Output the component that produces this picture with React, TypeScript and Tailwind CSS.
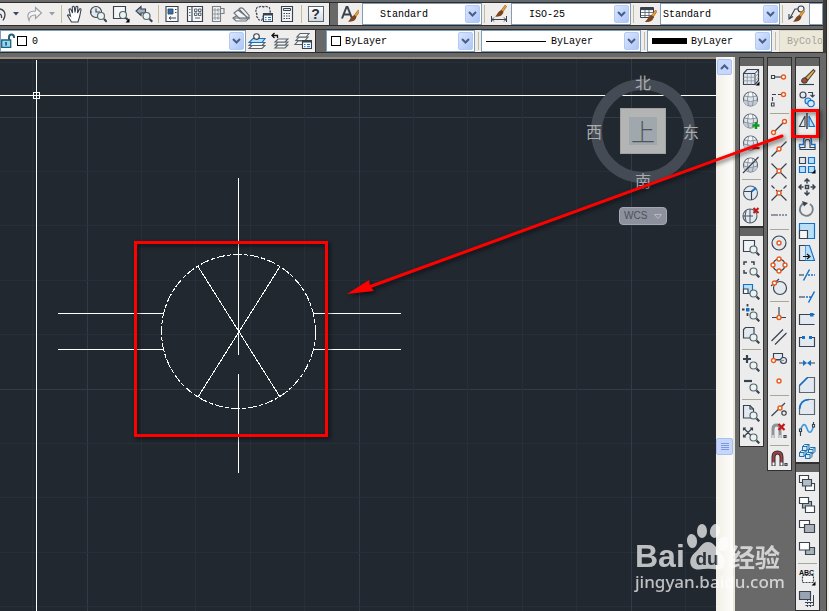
import type { ReactNode } from "react";

const K = "#39434f";
const B = "#1471c9";
const O = "#ea5a1c";
const F = "#e3e9f0";
const L = "#b9dff7";

function Icon({ children, w = 18 }: { children: ReactNode; w?: number }) {
  return (
    <svg width={w} height="18" viewBox={`0 0 ${w} 18`} fill="none" stroke={K} strokeWidth="1.15" className="shrink-0">
      {children}
    </svg>
  );
}

const Dot = ({ x, y, r = 2 }: { x: number; y: number; r?: number }) => (
  <circle cx={x} cy={y} r={r} fill="#fff" stroke={O} strokeWidth="1.4" />
);

const Mag = ({ x = 11, y = 11 }: { x?: number; y?: number }) => (
  <g>
    <path d={`M${x + 3} ${y + 3}l2.800 2.800`} strokeWidth="2.2" />
    <circle cx={x} cy={y} r="3.500" fill="#e9f5f1" stroke="#5a646f" strokeWidth="1.200" />
  </g>
);

const Globe = () => (
  <g>
    <circle cx="8.500" cy="9" r="7" fill="#dfe5ec" stroke="#58626d" strokeWidth="1.200" />
    <path d="M3 5.500Q5 2.500 8.500 2.500T14 5.500q-5.500 2-11 0z" fill="#f7f9fb" stroke="none" />
    <path d="M2 10.500q6.500 2.500 13 0v2l-3 3H5l-3-3z" fill="#c3ccd6" stroke="none" />
    <path d="M1.500 10q7 3 14 0M2.500 6q6 2 12 0M6.500 2.500q-2 6.500 0 13M10.500 2.500q2 6.500 0 13" stroke="#7b8590" strokeWidth=".8" />
  </g>
);

const Brush = ({ transform }: { transform?: string }) => (
  <g stroke="none" transform={transform}>
    <path d="M16 0l2 2-5.500 8-2.500-2z" fill="#eda13a" stroke="#8b5a1c" strokeWidth=".9" />
    <path d="M10.500 7l3 2.800c-1 6-6 7.500-12.500 6.700 4-2 4-7.500 9.500-9.500z" fill="#7d4420" />
  </g>
);

const Flyout = () => <path d="M17.500 13.500v4h-4z" fill="#000" stroke="none" />;

const Cube = ({ x, y }: { x: number; y: number }) => (
  <g transform={`translate(${x} ${y})`} stroke="#1d6fae" strokeWidth="1">
    <path d="M.5 2.500l2-2h4.500v4l-2 2H.5z" fill="#d7ecf9" />
    <path d="M.5 2.500H5v4M5 2.500l2-2" />
  </g>
);

type Tool = [string, ReactNode] | null;

const views: Tool[] = [
  ["Named views", <><path d="M1.500 5.500L5 1.500h11.500v11L13 16.500H1.500z" fill={F} /><path d="M1.500 5.500H13v11M13 5.500l3.500-4" strokeWidth="1" /><path d="M5.300 5.500v11M9.200 5.500v11M1.500 9.200H13M1.500 12.800H13M13 9l3.500-3.500M13 13l3.500-4" stroke="#8b949e" strokeWidth=".8" /><Flyout /></>],
  ["Globe", <Globe />],
  ["Add globe", <><Globe /><path d="M14 10v7M10.500 13.500h7" stroke="#0c9a1e" strokeWidth="2.400" /></>],
  ["Remove globe", <><Globe /><path d="M10.500 14h7" stroke="#c41414" strokeWidth="2.400" /></>],
  ["Hide globe", <><Globe /><path d="M1 17L16.500 1" /></>],
  null,
  ["Globe corner", <><circle cx="8.500" cy="9" r="7" fill={F} stroke="#58626d" /><path d="M2 7.500h7.500V16M9.500 7.500L14 4" /><path d="M9.500 7.500L14 4" stroke={B} strokeWidth="1.800" /></>],
  ["Delete globe", <><circle cx="8" cy="10" r="7" fill={F} stroke="#58626d" /><path d="M1 10h10M8 3v14M4 5q-2 5 0 10" strokeWidth=".9" /><path d="M11.500 2l5 5M16.500 2l-5 5" stroke="#c41414" strokeWidth="2" /></>],
];

const zooms: Tool[] = [
  ["Zoom window", <><path d="M1.500 2.500h11v11h-11z" fill="#f1f4f7" /><Mag x={11.5} y={11.5} /></>],
  ["Zoom dynamic", <><path d="M2 5V2h3M9 2h3v3M2 10v3h3" strokeWidth="1.500" /><Mag x={11.5} y={11.5} /></>],
  ["Zoom scale", <><path d="M1.500 2.500h9v9h-9z" fill={L} stroke={B} /><path d="M1.500 7h4.500v4.500H1.500z" fill="#fff" /><Mag x={11.5} y={11.5} /></>],
  ["Zoom center", <><path d="M4 4h3.500v3.500H4z" fill={B} stroke="none" /><path d="M5.500 0v2.500M5.500 9v3M0 5.500h2.500M9 5.500h3" strokeWidth="1.800" /><Mag x={11.5} y={11.5} /></>],
  ["Zoom object", <><path d="M1.500 3.500l2-2H12v8l-2 2.500H1.500z" fill={F} /><Mag x={11.5} y={11.5} /></>],
  null,
  ["Zoom in", <><path d="M5 1v8M1 5h8" strokeWidth="2.200" /><Mag x={11.5} y={11.5} /></>],
  ["Zoom out", <><path d="M2 5h8" strokeWidth="2.200" /><Mag x={11.5} y={11.5} /></>],
  null,
  ["Zoom all", <><path d="M1.500 1.500H8l3.500 3.500v9h-10z" fill={F} /><path d="M8 1.500V5h3.500" /><Mag x={11.5} y={11.5} /></>],
  ["Zoom extents", <><path d="M1.500 2l9 9M10.500 2l-9 9M1.500 4.500V2H4M8 2h2.500v2.500M1.500 8.500V11H4" /><Mag x={11.5} y={11.5} /></>],
];

const snaps: Tool[] = [
  ["Temporary track point", <><path d="M4 9h8" /><path d="M1.500 7.500h3v3h-3z" fill="#fff" /><Dot x={13.5} y={9} /></>],
  ["Snap from", <><path d="M12 4.500H2.500v8" strokeDasharray="4 2" /><path d="M1.500 13h2.500v3H1.500z" fill="#fff" /><Dot x={13.5} y={4.5} /></>],
  null,
  ["Endpoint", <><path d="M4 14L14 4" /><Dot x={3.5} y={14.5} /><Dot x={14.5} y={3.5} /></>],
  ["Midpoint", <><path d="M1.500 16.500l15-15" /><Dot x={9} y={9} /></>],
  ["Intersection", <><path d="M1.500 1.500l15 15M16.500 1.500l-15 15" /><Dot x={9} y={9} /></>],
  ["Apparent intersection", <><path d="M1.500 1.500l3 3M6 6l10.500 10.500M16.500 1.500l-3 3M12 6L1.500 16.500" /><Dot x={9} y={9} /></>],
  ["Extension", <path d="M1 9h7M9 9h2M12 9h2M15 9h2" />],
  null,
  ["Center", <><circle cx="9" cy="9" r="7" fill={F} /><Dot x={9} y={9} /></>],
  ["Quadrant", <><circle cx="9" cy="9" r="6" fill={F} /><Dot x={9} y={3} /><Dot x={9} y={15} /><Dot x={3} y={9} /><Dot x={15} y={9} /></>],
  ["Tangent", <><circle cx="10" cy="10" r="6.500" fill={F} /><path d="M1 8l8-7" /><Dot x={4.5} y={5} /></>],
  null,
  ["Perpendicular", <><path d="M9 1v10M2 11.500h14" /><Dot x={9} y={11.5} /></>],
  ["Parallel", <path d="M1.500 13L13 1.500M5 16.500L16.500 5" />],
  ["Insert", <><path d="M3.500 3.500h9v6h-9z" fill={F} /><circle cx="13.500" cy="10.500" r="3" fill={F} /><path d="M4 10.500h10" stroke="#8b949e" /><Dot x={3.5} y={10.5} /></>],
  ["Node", <Dot x={9} y={9} />],
  null,
  ["Nearest", <><path d="M1.500 16L15 3" /><circle cx="14" cy="13" r="2.200" /><Dot x={10} y={8} /></>],
  ["No snap", <><path d="M3 16V7q0-4 3.500-4T10 7v9" stroke="#8d949c" strokeWidth="3" /><path d="M3 13v3M10 13v3" stroke="#dfe2e5" strokeWidth="1.500" /><path d="M8.500 2l6 6M14.500 2l-6 6" stroke="#c41414" strokeWidth="2.200" /><path d="M14 13.500h2v2h-2z" /></>],
  null,
  ["Snap settings", <><path d="M3.500 16V7q0-4.500 4-4.500t4 4.500v9" stroke="#30333a" strokeWidth="4" /><path d="M3.500 13V7q0-4.500 4-4.500t4 4.500v6" stroke="#a5413e" strokeWidth="2" /><path d="M3.500 12.500v3M11.500 12.500v3" stroke="#fff" strokeWidth="2" /><path d="M15 13.500h2v2h-2z" /></>],
];

const modify: Tool[] = [
  ["Erase", <><path d="M7 10l8.500-8.500 1.500 1.500L10 12z" fill="#e5b565" stroke="#5a4a30" /><path d="M4 11.500q2-2.500 4-1l1.500 2q-1 3-4 2.500-2.500-1-1.500-3.500z" fill="#b54a22" /><path d="M1 16.500h15" /></>],
  ["Copy", <><circle cx="5" cy="5" r="3" fill={F} /><path d="M10 2.500h4.500V7M12.500 5l2 2 2-2" /><circle cx="10" cy="11" r="3" fill={L} stroke={B} /><circle cx="13" cy="13.500" r="3.200" fill="#d7ebfa" stroke={B} /></>],
  ["Mirror", <><path d="M7 4v10.500H1.500z" fill={F} /><path d="M11 4v10.500h5.500z" fill={L} stroke={B} /><path d="M9 1v16" stroke="#111" /></>],
  ["Offset", <><path d="M1.500 13.500v-3h4V7q0-4.500 4-4.500t4 4.500v3.500h3.500v3" stroke={B} strokeWidth="1.400" /><path d="M2 15.500h15v-2h-5V8q0-2.500-2.500-2.500T7 8v5.500H2z" fill={F} /></>],
  ["Array", <><path d="M1.500 1.500h6v6h-6z" fill={F} /><path d="M10.500 1.500h6v6h-6zM1.500 10.500h6v6h-6zM10.500 10.500h6v6h-6z" fill={L} stroke={B} /><Flyout /></>],
  ["Move", <path d="M9 1v4.500M9 12.500V17M1 9h4.500M12.500 9H17M6.500 3.500L9 1l2.500 2.500M6.500 14.500L9 17l2.500-2.500M3.500 6.500L1 9l2.500 2.500M14.500 6.500L17 9l-2.500 2.500M7.500 7.500h3v3h-3z" strokeWidth="1.500" />],
  ["Rotate", <><path d="M7 3A6.500 6.500 0 1 0 12 4" stroke="#77808a" strokeWidth="1.800" /><path d="M4 1l6 2-4 3.500z" fill={K} stroke="none" /></>],
  ["Scale", <><path d="M1.500 1.500h15v15h-15z" fill={L} stroke={B} /><path d="M1.500 8.500h8v8h-8z" fill="#f4f6f8" /></>],
  ["Stretch", <><path d="M7 1.500h4.500l5 15H7z" fill={L} stroke={B} /><path d="M7 1.500H1.500v15H7" fill={F} /><path d="M5 12.500h6M9 10l3 2.500L9 15" stroke="#111" /></>],
  ["Trim", <><path d="M1 9h5" /><path d="M10 9h2M13 9h2M16 9h1M5.500 14.500L11.500 3.500" stroke={B} strokeWidth="1.500" /></>],
  ["Extend", <><path d="M1 9h6" /><path d="M8 9h2M11 9h2M10.500 14.500L16.500 3.500" stroke={B} strokeWidth="1.500" /></>],
  ["Break at point", <><path d="M16.500 4.500h-15v10h15" fill={F} /><path d="M12 3h3.500v3.500H12z" fill={B} stroke="none" /></>],
  ["Break", <><path d="M4.500 5.500h-3v9h15v-9h-3" fill={F} /><path d="M4 4h3v3H4zM11 4h3v3h-3z" fill={B} stroke="none" /></>],
  ["Join", <><path d="M1 9h5M12 9h5" /><path d="M5 6l4 3-4 3zM13 6L9 9l4 3z" fill={B} stroke="none" /></>],
  ["Chamfer", <><path d="M1.500 9.500l8-8h7v15h-15z" fill={F} stroke="#5b6672" /><path d="M1.500 9.500l8-8" stroke={B} strokeWidth="1.600" /></>],
  ["Fillet", <><path d="M1.500 12Q2 2 11 1.500h5.500v15h-15z" fill={F} stroke="#5b6672" /><path d="M1.500 11Q2 2 11 1.500" stroke={B} strokeWidth="1.600" /></>],
  ["Blend curves", <><path d="M2.500 11v5M15.500 2v3" /><path d="M2.500 10Q6 0 9 8.500t6.500-2" stroke="#3a9be6" strokeWidth="1.600" /><path d="M1.500 9h2v2.500h-2zM14.500 4.500h2V7h-2z" fill="#fff" /></>],
  ["Explode", <><Cube x={4} y={2} /><Cube x={10} y={5} /><Cube x={1} y={8} /><Cube x={7} y={10} /></>],
];

const order: Tool[] = [
  ["Bring to front", <><path d="M1.500 1.500h9v7h-9zM7.500 9.500h9v7h-9z" fill="#fff" /><path d="M4.500 5.500h9v6.500h-9z" fill="#b3bdc8" /></>],
  ["Send to back", <><path d="M4.500 5.500h9v6.500h-9z" fill="#9fb3b5" /><path d="M1.500 1.500h9v6h-9zM7.500 10h9v6.500h-9z" fill="#fff" /></>],
  ["Bring above objects", <><path d="M1.500 2.500h10v7h-10z" fill="#fff" /><path d="M6.500 6.500h10v8h-10z" fill="#adb0b8" /></>],
  ["Send under objects", <><path d="M7.500 7.500h9v7h-9z" fill="#a6b2b5" /><path d="M1.500 2.500h10v7.500h-10z" fill="#fff" /></>],
  null,
  ["Bring text to front", <><path d="M4.500 7.500H15.500v7h-11z" fill="#f6f6f6" strokeDasharray="2 1" /><path d="M0 1h16v6H0z" fill="#ececec" stroke="none" /><text x="1" y="7" fontSize="7" fontWeight="700" fontFamily="Liberation Sans, sans-serif" fill="#111" stroke="none">ABC</text><Flyout /></>],
  ["Send hatch to back", <><path d="M7.500 15.500h8v-9M7 12.500h8.500M9.500 9v8M12.500 9v8M15.500 5v12" strokeDasharray="2 1" strokeWidth="1" /><path d="M1.500 1.500h11v8h-11z" fill="#98a4b3" /></>],
];

const nav: Tool[] = [
  ["Pan", <><path d="M5.500 17L1.500 10.500q.5-1.500 3 .5L3 4.500q1-1.500 2 0L6.500 8 6.300 2q1.200-1.500 2 0L9 7.500l1-5.800q1.300-1 1.800.3L11.500 8l2-4q1.500-.8 1.500.8L13.500 12 12 17z" fill="#fff" strokeWidth="1.100" /></>],
  ["Zoom realtime", <><circle cx="7" cy="7" r="5.500" fill={F} /><path d="M7 3.500V7h4M2 7h1" /><Mag x={12} y={11} /></>],
  ["Zoom window", <><path d="M1.500 1.500h12v12h-12z" fill="#f5f5f5" /><Mag x={11} y={10} /><Flyout /></>],
  ["Zoom previous", <><path d="M6 1.500v2.500h4.500v4H6v2.500L1 6z" fill="#a3b1c4" /><Mag x={11.5} y={11} /></>],
];

const panels: Tool[] = [
  ["Properties", <><path d="M3 1.500h12v15H3z" fill="#f8f9fb" /><path d="M5 4h5v5H5z" fill="#2d6fb0" strokeWidth=".8" /><path d="M12 4.500h1.500M12 7.500h1.500M6 13h7M8 11.500L6 13l2 1.500" strokeWidth="1" /></>],
  ["DesignCenter", <><path d="M1.500 1.500h15v15h-15zM6 1.500v15" fill="#f8f9fb" /><path d="M8.500 4h2.500v2.500H8.500zM12.500 4H15v2.500h-2.500zM8.500 8H11v2.500H8.500zM12.500 8H15v2.500h-2.500zM9 13h5M3 4.500h1.500M3 7.500h1.500M3 10.500h1.500" strokeWidth=".8" /></>],
  ["Tool palettes", <><path d="M3.500 1.500h8v15h-8zM11.500 3.500H15v5h-3.500z" fill="#f0f0f0" stroke="#78818a" /><path d="M5 4h2v2H5zM8.500 4h1.500v2H8.500zM5 8h2v2H5zM8.500 8h1.500v2H8.500zM5 12h2v2H5zM8.500 12h1.500v2H8.500z" stroke="#78818a" strokeWidth=".7" /></>],
  ["Sheet set", <><path d="M1 13l5-3h8l3 3-3 3H4z" fill="#f4f4f4" stroke="#6b747e" /><path d="M2 8l4-3 9 7-1 2H8zM7 4q2-2 4-.5l6 7v3l-2-1z" fill="#f4f4f4" stroke="#6b747e" /><path d="M1 13h13l3 0" stroke="#6b747e" /></>],
  ["Markup set", <><path d="M1.500 4q0-2.500 3-2 2-1.500 4 0 2-1.500 4 0 3 0 2 3 1.500 2 0 3.500H9L7 15q-4 1-3.500-2-3-1-1.500-4-2-2-.5-5z" fill="#eee" strokeDasharray="2.500 1" /><path d="M8.500 8.500h9v8h-9z" fill="#fff" /><path d="M8.500 9.500h9" strokeWidth="2" /><path d="M10 12.500h1.500M13 12.500h3M10 14.700h1.500M13 14.700h3" stroke={B} strokeWidth="1" /></>],
  ["Calculator", <><path d="M3.500 1.500h11v15h-11z" fill="#f4f6f8" /><path d="M5.500 3.500h7v2h-7z" fill={F} strokeWidth="1" /><path d="M5.500 8.500h7M5.500 11h7M5.500 13.500h7" strokeDasharray="1.500 1" strokeWidth="1.200" /></>],
];

const layers: Tool[] = [
  ["Make current", <><path d="M4 13.500h13l-3 3H1z" fill="#f6f6f6" stroke="#5a646f" /><path d="M4 10.500h13l-3 3H1z" fill="#f6f6f6" stroke="#5a646f" /><path d="M5 6.500h12l-3 4H1z" fill={L} stroke={B} /><circle cx="8.500" cy="4.500" r="2.800" fill="#f6f6f6" /></>],
  ["Layer previous", <><path d="M7 13h10l-3 3H4z" fill="#f6f6f6" stroke="#5a646f" /><path d="M7 10h10l-3 3H4z" fill="#f6f6f6" stroke="#5a646f" /><path d="M7 7h10l-3 3H4z" fill="#f6f6f6" stroke="#5a646f" /><path d="M1 3.500h5.500V6M3.500 1L1 3.500 3.500 6" stroke="#111" strokeWidth="1.300" /></>],
  ["Layer states", <><path d="M4 9h9l-3 3.500H1z" fill="#f6f6f6" stroke="#5a646f" /><path d="M5 5h9l-3 3.500H2z" fill="#f6f6f6" stroke="#5a646f" /><path d="M6 1.500h9L12 5H3z" fill="#f6f6f6" stroke="#5a646f" /><path d="M8.500 8.500h9v8h-9z" fill="#fff" /><path d="M8.500 9.500h9" strokeWidth="2" /><path d="M10 12.500h1.500M13 12.500h3M10 14.700h1.500M13 14.700h3" stroke={B} strokeWidth="1" /></>],
];

function Palette({ tools, label }: { tools: Tool[]; label: string }) {
  return (
    <section aria-label={label} className="flex w-[25px] flex-col border border-[#303030] bg-[#ececec]">
      <div className="h-2 bg-[#636363]" />
      {tools.map((t, i) =>
        t ? (
          <button key={i} aria-label={t[0]} className="flex h-[22px] w-full items-center pl-0.5">
            <Icon>{t[1]}</Icon>
          </button>
        ) : (
          <div key={i} className="flex h-1.5 items-center px-0.5">
            <div className="h-px w-full bg-[#a9a695]" />
          </div>
        ),
      )}
    </section>
  );
}

function ToolRow({ tools }: { tools: Tool[] }) {
  return (
    <>
      {tools.map((t, i) => t && (
        <button key={i} aria-label={t[0]} className="flex h-full w-[23px] shrink-0 items-center pl-0.5">
          <Icon>{t[1]}</Icon>
        </button>
      ))}
    </>
  );
}

function Sep({ wide = false }: { wide?: boolean }) {
  return (
    <div className={`flex h-full shrink-0 items-center justify-center bg-[#efeeec] ${wide ? "w-1.5" : "w-[5px]"}`}>
      <div className="h-[18px] w-px bg-[#c3bb9c]" />
    </div>
  );
}

function Combo({ value, label, className, mark, chevron = true }: { value: string; label: string; className: string; mark?: ReactNode; chevron?: boolean }) {
  return (
    <div className={`grid h-full grid-cols-1 grid-rows-1 overflow-hidden border border-[#7d9db8] bg-white font-['Liberation_Mono',monospace] text-[10px] text-black ${chevron ? "shrink-0" : "min-w-0 flex-1"}`}>
      <select aria-label={label} className={`col-start-1 row-start-1 h-full appearance-none bg-transparent outline-none ${className}`}>
        <option>{value}</option>
      </select>
      <span className="pointer-events-none col-start-1 row-start-1 flex items-center self-center justify-self-start">{mark}</span>
      {chevron && (
        <span className="pointer-events-none col-start-1 row-start-1 mr-px flex h-[18px] w-[15px] items-center justify-center self-center justify-self-end rounded-xs border border-[#b5c9f5] bg-linear-to-br from-[#dbe6ff] to-[#aec6f6]">
          <svg width="9" height="6" viewBox="0 0 9 6" fill="none" stroke="#465f88" strokeWidth="2"><path d="M1 1l3.500 3.500L8 1" /></svg>
        </span>
      )}
    </div>
  );
}

const Down = ({ color }: { color: string }) => (
  <svg width="6" height="4" viewBox="0 0 6 4"><path d="M0 0h6L3 3.500z" fill={color} /></svg>
);

function StyleButton({ label, children }: { label: string; children: ReactNode }) {
  return (
    <button aria-label={label} className="flex h-full w-6 shrink-0 items-center justify-center">
      <Icon>{children}</Icon>
    </button>
  );
}

function StandardBar() {
  return (
    <div className="flex h-6 w-full overflow-hidden border-y border-[#2c2c2c]">
      <div className="flex shrink-0 items-center border-r border-[#2c2c2c] bg-[#efeeec] pr-0.5">
        <button aria-label="Undo" className="w-2">
          <svg width="8" height="18" viewBox="0 0 8 18" fill="none" stroke={K} strokeWidth="1.300"><path d="M0 4q5 1 5 6 0 2-2 5.500M0 9q2 1 1.500 4" /></svg>
        </button>
        <button aria-label="Undo list" className="flex w-[15px] justify-center"><Down color="#3c4766" /></button>
        <button aria-label="Redo" className="flex w-[21px] justify-center">
          <Icon><path d="M10.500 2.500l6 5.500-6 5.500V10Q5 9.500 4 15.500 0 6 10.500 6z" fill="#f4f4f4" stroke="#9b9fa4" /></Icon>
        </button>
        <button aria-label="Redo list" className="flex w-[15px] justify-center"><Down color="#9b9fa4" /></button>
        <Sep />
        <ToolRow tools={nav} />
        <Sep />
        <ToolRow tools={panels} />
        <Sep />
        <button aria-label="Help" className="flex w-[23px] justify-center">
          <span className="flex size-4 items-center justify-center border border-[#59636e] bg-linear-to-b from-white to-[#d5dae0] font-['Liberation_Sans',sans-serif] text-sm leading-none font-bold text-[#2b333d]">?</span>
        </button>
      </div>
      <div className="w-2 shrink-0 bg-[#696969]" />
      <div className="flex min-w-0 flex-1 items-center bg-[#efeeec]">
        <StyleButton label="Text style">
          <path d="M1 13.500L5.500 2h1L11 13.500M3 9.500h6" strokeWidth="2" /><Brush transform="translate(6 5) scale(.7)" />
        </StyleButton>
        <Combo label="Text style name" value="Standard" className="w-[118px] pl-[17px]" />
        <Sep />
        <StyleButton label="Dimension style"><Brush transform="translate(4 0) scale(.7)" /><path d="M1.500 11v6M16.500 11v6M2 14.500h14M4 12.500l-2 2 2 2M14 12.500l2 2-2 2" strokeWidth="1" /></StyleButton>
        <Combo label="Dimension style name" value="ISO-25" className="w-[118px] pl-[17px]" />
        <Sep />
        <StyleButton label="Table style"><path d="M1.500 2.500h13v10h-13z" fill="#fff" strokeWidth="1" /><path d="M1.500 4h13" strokeWidth="2.200" /><path d="M6 4v8M10 4v8M2 7.500h12M2 10.500h12" strokeWidth=".7" /><Brush transform="translate(5 5) scale(.72)" /></StyleButton>
        <Combo label="Table style name" value="Standard" className="w-[118px] pl-0.5" />
        <Sep />
        <StyleButton label="Multileader style"><circle cx="13" cy="4" r="3" fill="#f5f5f5" /><path d="M10 4H7L2 13M1 9v5l4-2.500" /><Brush transform="translate(4 5) scale(.7)" /></StyleButton>
        <Combo label="Multileader style name" value="" className="w-full" chevron={false} />
      </div>
    </div>
  );
}

const Swatch = () => <span className="block size-[10px] border border-black bg-white" />;

function LayerBar() {
  return (
    <div className="flex h-6 w-full overflow-hidden border-y border-[#2c2c2c]">
      <div className="flex shrink-0 border-r border-[#2c2c2c] bg-[#efeeec]">
        <Combo
          label="Layer"
          value="0"
          className="w-[244px] pl-[31px]"
          mark={
            <span className="flex items-center gap-0.5">
              <svg width="14" height="16" viewBox="0 0 14 16" fill="none" stroke="#27607d" strokeWidth="1.300"><path d="M8 7V4q0-2.500 2.500-2.500T13 4v1" stroke="#27607d" strokeWidth="2" /><path d="M.7 7h9v7.300h-9z" fill="#8fdaf0" /><path d="M5 9v3.500" strokeWidth="1.800" /></svg>
              <Swatch />
            </span>
          }
        />
        <ToolRow tools={layers} />
      </div>
      <div className="w-2.5 shrink-0 bg-[#696969]" />
      <div className="flex min-w-0 flex-1 bg-[#efeeec]">
        <Combo label="Color" value="ByLayer" className="w-[147px] pl-[18px]" mark={<span className="pl-1"><Swatch /></span>} />
        <Sep wide />
        <Combo label="Linetype" value="ByLayer" className="w-[158px] pl-[69px]" mark={<span className="pl-1"><span className="block h-px w-[60px] bg-black" /></span>} />
        <Sep wide />
        <Combo label="Lineweight" value="ByLayer" className="w-[123px] pl-[43px]" mark={<span className="pl-1"><span className="block h-1.5 w-[35px] bg-black" /></span>} />
        <Sep wide />
        <button disabled className="ml-px min-w-0 flex-1 overflow-hidden border border-[#d6d2c2] bg-[#ebe8da] pl-[7px] text-left font-['Liberation_Mono',monospace] text-[10px] text-[#a5a293]">ByColor</button>
      </div>
    </div>
  );
}

const gridSteps = Array.from({ length: 40 }, (_, i) => i - 1);

function Drawing() {
  return (
    <svg className="absolute inset-0 size-full" shapeRendering="crispEdges" fill="none" aria-hidden="true">
      <g transform="translate(0 -59)">
        {gridSteps.map((n) => {
          const x = Math.floor(87 + n * 54.4) + 0.5;
          const y = Math.floor(117 + n * 54.4) + 0.5;
          return (
            <g key={n} stroke={n % 5 === 0 ? "#333b48" : "#272f3a"}>
              <path d={`M${x} 59V2200`} />
              <path d={`M0 ${y}H2200`} />
            </g>
          );
        })}
        <g stroke="#fff">
          <path d="M36.500 60V2200M0 95.500H2200M33.500 92.500h6v6h-6z" />
          <path d="M238.500 178V355M238.500 374v99M58 313.500h106M314 313.500h87M58 349.500h106M314 349.500h87" />
          <path d="M198 266.500L280 397M280 266.500L198 397" />
          <circle cx="238.500" cy="331.500" r="77" strokeDasharray="9 2 4 2" />
        </g>
      </g>
    </svg>
  );
}

function ViewCube() {
  return (
    <div className="absolute top-5 right-[21px] size-[104px] rounded-full border-[11px] border-[#454b54] font-['Noto_Sans_CJK_SC',sans-serif] text-base leading-4 text-[#a9acae]">
      <span className="absolute -top-4 left-[33px]">北</span>
      <span className="absolute top-[33px] -left-4">西</span>
      <span className="absolute top-[33px] left-[81px]">东</span>
      <span className="absolute top-[82px] left-[33px]">南</span>
      <button className="absolute top-[18px] left-[18px] flex size-[46px] items-center justify-center border border-[#9fa1a2] bg-[#b3b4b4]">
        <span className="flex size-7 items-center justify-center bg-[#a0a8ad] font-['Noto_Sans_CJK_SC',sans-serif] text-2xl leading-7 font-light text-[#4c545d]">上</span>
      </button>
      <button className="absolute top-[117px] left-[17px] flex h-[18px] w-12 items-center justify-between rounded-sm border border-[#a4a7b1] bg-[#8d919e] px-1 font-['Liberation_Sans',sans-serif] text-[10px] text-[#4a505d]">
        WCS
        <svg width="8" height="5" viewBox="0 0 8 5" fill="none" stroke="#b6b9c2"><path d="M.5.500h7L4 4.500z" /></svg>
      </button>
    </div>
  );
}

function ScrollBar() {
  return (
    <div className="flex w-[19px] shrink-0 flex-col border-r-2 border-[#e9e7da] bg-linear-to-r from-[#f2efe6] to-[#fefdfb] pt-0.5">
      <button aria-label="Scroll up" className="mx-px flex h-4 items-center justify-center rounded-xs border border-[#a9bff0] bg-[#c6d6fc]">
        <svg width="9" height="6" viewBox="0 0 9 6" fill="none" stroke="#465f88" strokeWidth="2"><path d="M1 5l3.500-3.500L8 5" /></svg>
      </button>
      <div className="h-[363px]" />
      <div className="flex h-[17px] flex-col items-center justify-center gap-px rounded-xs border border-[#a9bff0] bg-[#c6d6fc]">
        <span className="h-px w-2 bg-[#7f9ad8]" />
        <span className="h-px w-2 bg-[#7f9ad8]" />
        <span className="h-px w-2 bg-[#7f9ad8]" />
        <span className="h-px w-2 bg-[#7f9ad8]" />
      </div>
    </div>
  );
}

function Annotations() {
  return (
    <svg className="pointer-events-none absolute inset-0 size-full drop-shadow-[2px_2px_2px_rgba(0,0,0,0.6)]" fill="none" stroke="#fe0000" strokeWidth="3" aria-hidden="true">
      <path d="M135.500 242.500h191v193h-191z" />
      <path d="M792.500 110.500h25v26h-25z" />
      <path d="M369 287L782 136" strokeLinecap="round" />
      <path d="M347 294l22-14 1 6 4 5z" fill="#fe0000" stroke="none" />
    </svg>
  );
}

function Watermark() {
  return (
    <div className="pointer-events-none absolute top-[520px] left-[635px] text-white opacity-70">
      <div className="flex h-[52px] items-end">
        <span className="w-[51px] font-['Liberation_Sans',sans-serif] text-[32px] leading-8 font-bold">Bai</span>
        <svg width="44" height="52" viewBox="0 0 44 52" fill="#fff">
          <ellipse cx="6" cy="21" rx="5" ry="7" transform="rotate(-8 6 21)" />
          <ellipse cx="16" cy="11" rx="5" ry="7" />
          <ellipse cx="29" cy="11" rx="5" ry="7" transform="rotate(12 29 11)" />
          <ellipse cx="37" cy="24" rx="5.500" ry="7" transform="rotate(15 37 24)" />
          <path d="M22 22c6 0 8 6 13 11 6 6 5 17-4 16.500-6-1-12-1-18 0C3 50 2 39 8 33.500 14 28 16 22 22 22z" />
          <text x="21" y="45" textAnchor="middle" fontFamily="Liberation Sans, sans-serif" fontSize="19" fontWeight="700" fill="#303740">du</text>
        </svg>
        <span className="font-['Noto_Sans_CJK_SC',sans-serif] text-[25px] leading-8 font-bold">经验</span>
      </div>
      <div className="font-['Noto_Sans',sans-serif] text-[17px] leading-5 font-medium">jingyan.baidu.com</div>
    </div>
  );
}

export default function App() {
  return (
    <div className="relative flex h-screen w-full overflow-hidden bg-[#696969]">
      <div className="flex min-w-0 flex-1 flex-col">
        <header className="flex flex-col gap-[3px] border-r-3 border-[#3c3c3c] bg-[#696969] pt-0.5">
          <StandardBar />
          <LayerBar />
        </header>
        <div className="mt-1 flex min-h-0 flex-1">
          <main className="relative min-w-0 flex-1 overflow-hidden border-t-2 border-[#968e80] bg-[#212830]">
            <Drawing />
            <ViewCube />
          </main>
          <ScrollBar />
          <aside className="flex shrink-0 items-start gap-[3px] pr-1.5 pl-1">
            <div className="flex flex-col">
              <Palette label="View" tools={views} />
              <Palette label="Zoom" tools={zooms} />
            </div>
            <Palette label="Object snap" tools={snaps} />
            <div className="flex flex-col">
              <Palette label="Modify" tools={modify} />
              <Palette label="Draw order" tools={order} />
            </div>
          </aside>
        </div>
      </div>
      <div className="w-[3px] shrink-0 border-l border-[#2c2c2c] bg-[#f3f1e8]" />
      <Watermark />
      <Annotations />
    </div>
  );
}
